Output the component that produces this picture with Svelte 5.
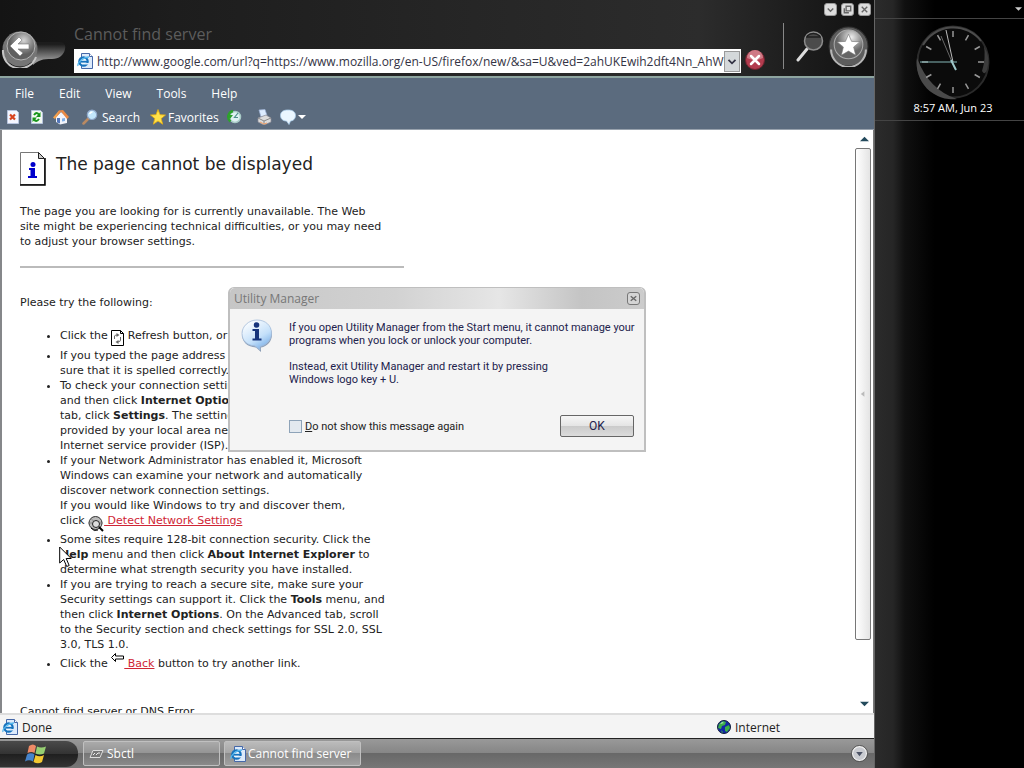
<script lang="ts">
    const menus = ["File", "Edit", "View", "Tools", "Help"];
    const ticks = [0, 30, 60, 90, 120, 150, 180, 210, 240, 270, 300, 330];

    let address = $state(
        "http://www.google.com/url?q=https://www.mozilla.org/en-US/firefox/new/&sa=U&ved=2ahUKEwih2dft4Nn_AhWuMV",
    );
    let hideMessage = $state(false);
    let dialogOpen = $state(true);
</script>

{#snippet ieIcon()}
    <svg class="ie" viewBox="0 0 16 16" aria-hidden="true">
        <path d="M4.500 .5h8l3 3v12h-11z" fill="#dceafa" stroke="#4668a8" />
        <path d="M12.500 .5v3h3" fill="#fff" stroke="#4668a8" />
        <circle cx="6.500" cy="8.500" r="4.200" fill="#eef8ff" stroke="#1672bd" stroke-width="2.200" />
        <path d="M3 8.700h8" stroke="#1672bd" stroke-width="1.800" />
        <path d="M8 10h4v1.500h-4z" fill="#dceafa" />
        <path d="M1 13C0 10 6 4 12 4" fill="none" stroke="#55b8ee" stroke-width="1.300" />
    </svg>
{/snippet}

<div class="screen">
    <div class="workspace">
        <div class="browser">
            <header>
                <div class="caption">
                    <button aria-label="Minimize">
                        <svg viewBox="0 0 12 12"><path d="M3 5l3 3 3-3" /></svg>
                    </button>
                    <button aria-label="Restore">
                        <svg viewBox="0 0 12 12"><path d="M4.500 2.500h5v5h-5zM2.500 4.500v5h5" /></svg>
                    </button>
                    <button aria-label="Close">
                        <svg viewBox="0 0 12 12"><path d="M3 3l6 6M9 3l-6 6" /></svg>
                    </button>
                </div>
                <div class="navigation">
                    <button class="back" aria-label="Back">
                        <svg viewBox="0 0 66 38">
                            <defs>
                                <linearGradient id="tail" x1="0" y1="0" x2="0" y2="1">
                                    <stop offset="0.100" stop-color="#1d1d1d" />
                                    <stop offset="0.800" stop-color="#979797" />
                                </linearGradient>
                                <radialGradient id="orb" cx="0.600" cy="0.300">
                                    <stop offset="0" stop-color="#d5d5d5" />
                                    <stop offset="0.600" stop-color="#8b8b8b" />
                                    <stop offset="1" stop-color="#606060" />
                                </radialGradient>
                            </defs>
                            <path d="M28 12h31c5 0 7 3 6 7-1 6-6 10-13 10-10 0-13 1-19 6z" fill="url(#tail)" />
                            <circle cx="20" cy="19" r="17.500" fill="#757575" />
                            <path d="M3 20a17 17 0 0 0 33 7" fill="none" stroke="#c4c4c4" stroke-width="2" />
                            <circle cx="21" cy="16" r="14" fill="url(#orb)" stroke="#b4b4b4" />
                            <path d="M10 16l9-9 3 3-4 4h11v5H18l5 4-3 3z" fill="#fff" stroke="#777" stroke-width=".6" />
                        </svg>
                    </button>
                    <div class="location">
                        <h1>Cannot find server</h1>
                        <div class="address">
                            {@render ieIcon()}
                            <input type="text" aria-label="Address" bind:value={address} />
                            <button aria-label="Show addresses">
                                <svg viewBox="0 0 16 20"><path d="M4 9l4 4 4-4" /></svg>
                            </button>
                        </div>
                    </div>
                    <button class="stop" aria-label="Stop">
                        <svg viewBox="0 0 20 20">
                            <circle cx="10" cy="10" r="9.500" fill="#b23c4e" stroke="#6e2430" />
                            <path d="M2 8a8 8 0 0 1 16 0q-8 4-16 0z" fill="#cf7a86" />
                            <path d="M6 6l8 8M14 6l-8 8" stroke="#fff" stroke-width="2.500" stroke-linecap="round" />
                        </svg>
                    </button>
                    <div class="tools">
                        <button class="find" aria-label="Search">
                            <svg viewBox="0 0 28 32">
                                <path d="M11 19L2 30" stroke="#ddd" stroke-width="3" stroke-linecap="round" />
                                <circle cx="17.500" cy="11" r="9" fill="#4b4b4b" stroke="#8c8c8c" stroke-width="1.500" />
                                <path d="M10 7h15M11 6q6-5 13 0" fill="none" stroke="#1f1f1f" stroke-width="1.500" />
                            </svg>
                        </button>
                        <button class="star" aria-label="Favorites">
                            <svg viewBox="0 0 40 40">
                                <defs>
                                    <radialGradient id="shine" cx="0.600" cy="0.250">
                                        <stop offset="0" stop-color="#eee" />
                                        <stop offset="0.500" stop-color="#aaa" />
                                        <stop offset="1" stop-color="#666" />
                                    </radialGradient>
                                </defs>
                                <circle cx="20" cy="20" r="19" fill="#5d5d5d" stroke="#303030" />
                                <path d="M3 23a17 17 0 0 0 34 0" fill="none" stroke="#b6b6b6" stroke-width="2" />
                                <circle cx="20" cy="18" r="14" fill="url(#shine)" stroke="#aaa" />
                                <path d="M20 8l3 7 8 .5-6 5 2 8-7-4-7 4 2-8-6-5 8-.5z" fill="#fff" stroke="#777" stroke-width=".6" />
                            </svg>
                        </button>
                    </div>
                </div>
            </header>

            <div class="bars">
                <nav>
                    {#each menus as menu}
                        <button>{menu}</button>
                    {/each}
                </nav>
                <div class="toolbar">
                    <button aria-label="Stop loading">
                        <svg viewBox="0 0 16 16">
                            <path d="M2.500 1.500h9l2 2v11h-11z" fill="#f4f6ff" stroke="#b7c4de" />
                            <path d="M5 5.500l5 5M10 5.500l-5 5" stroke="#d8431f" stroke-width="2.200" />
                        </svg>
                    </button>
                    <button aria-label="Refresh">
                        <svg viewBox="0 0 16 16">
                            <path d="M2.500 1.500h9l2 2v11h-11z" fill="#f2faf2" stroke="#b7c4de" />
                            <path d="M5 6q3-4 5 0M10 10q-3 4-5 0" fill="none" stroke="#18951c" stroke-width="2" />
                            <path d="M11.500 3v5H7zM3.500 13V8.500H8z" fill="#18951c" />
                        </svg>
                    </button>
                    <button aria-label="Home">
                        <svg viewBox="0 0 16 16">
                            <path d="M3 8l5-5 6 5v6l-7 1.500L3 13z" fill="#f3f5fb" />
                            <path d="M0 8.500L6 1.500l2 1L2 10z" fill="#f4a14d" />
                            <path d="M6 1.500L10 1l6 7-2 2-6-7.500L4 7z" fill="#e98a45" />
                            <path d="M4 9h3v5.500l-3-1z" fill="#5376b9" />
                            <path d="M9 9.500l3-.5v3l-3 .5z" fill="#7fb0e8" />
                        </svg>
                    </button>
                    <button class="search">
                        <svg viewBox="0 0 16 16">
                            <path d="M7 9L1.500 14.500" stroke="#b98a63" stroke-width="2.500" stroke-linecap="round" />
                            <circle cx="10" cy="5.800" r="4.700" fill="#c2e6fb" stroke="#91a9cb" stroke-width="1.200" />
                            <path d="M7.500 5q1-2 3-2" fill="none" stroke="#fff" stroke-width="1.500" />
                        </svg>
                        Search
                    </button>
                    <button class="favorites">
                        <svg viewBox="0 0 16 16">
                            <path d="M8 .5l2 5.200 5.500.3-4.300 3.600 1.500 5.600L8 12l-4.700 3.200 1.500-5.600L.5 6 6 5.700z" fill="#ffe24a" stroke="#e6ad10" stroke-width=".8" />
                        </svg>
                        Favorites
                    </button>
                    <button aria-label="History">
                        <svg viewBox="0 0 16 16">
                            <circle cx="8" cy="8" r="5.500" fill="#dff0f2" stroke="#a8cbc7" stroke-width="1.500" />
                            <path d="M11 4L7.500 8.500H11" fill="none" stroke="#4f8f8a" stroke-width="1.200" />
                            <path d="M3.500 12.500A6 6 0 0 1 6 2" fill="none" stroke="#2da22c" stroke-width="2.500" />
                            <path d="M0 6h6L3 10z" fill="#2da22c" />
                        </svg>
                    </button>
                    <button class="print" aria-label="Print">
                        <svg viewBox="0 0 16 16">
                            <path d="M3 1l6-.5 2 6-6 1.500z" fill="#dcecff" stroke="#9db2d6" stroke-width=".7" />
                            <path d="M2 9l8-3 5 3v4l-7 3-6-3z" fill="#dcdcdc" stroke="#8b8b95" stroke-width=".7" />
                            <path d="M2 9l6 3 7-3M8 12v4" fill="none" stroke="#888" />
                            <path d="M4 13l4 2 3-1" stroke="#f2a26a" fill="none" />
                        </svg>
                    </button>
                    <button aria-label="Discuss">
                        <svg class="bubble" viewBox="0 0 26 16">
                            <path d="M8 1c5 0 7.500 2 7.500 5.500S13 12 10.500 12L9 15.500 6.500 12C3 12 .5 10 .5 6.500S3 1 8 1z" fill="#eaf6ff" stroke="#a9cbe8" stroke-width=".8" />
                            <path d="M18 6h8l-4 4z" fill="#fff" />
                        </svg>
                    </button>
                </div>
            </div>

            <div class="view">
                <main>
                    <div class="heading">
                        <svg viewBox="0 0 26 34" aria-hidden="true">
                            <path d="M.5 .5h18l6 6v26H.5z" fill="#fff" stroke="#777" />
                            <path d="M25 6v27H0" fill="none" stroke="#000" stroke-width="1.500" />
                            <path d="M18.500 .5v6h6z" fill="#ccc" stroke="#222" />
                            <circle cx="13" cy="12.500" r="2.500" fill="#00c" />
                            <path d="M9 16h6v8h2v2H8v-2h2.500v-6H9z" fill="#00c" />
                        </svg>
                        <h2>The page cannot be displayed</h2>
                    </div>
                    <p>
                        The page you are looking for is currently unavailable. The Web<br />
                        site might be experiencing technical difficulties, or you may need<br />
                        to adjust your browser settings.
                    </p>
                    <hr />
                    <p>Please try the following:</p>
                    <ul>
                        <li>
                            Click the
                            <svg class="low" viewBox="0 0 13 16" aria-hidden="true">
                                <path d="M.5 .5h9l3 3v12H.5z" fill="#fff" stroke="#000" />
                                <path d="M9.500 .5v3h3" fill="none" stroke="#000" />
                                <path d="M3.500 9V6q0-1 3-1M9.500 7v3q0 2-3 2" fill="none" stroke="#666" />
                                <path d="M5.500 3l3 2-3 2zM7.500 10l-3 2 3 2z" fill="#666" />
                            </svg>
                            Refresh button, or try again later.
                        </li>
                        <li>
                            If you typed the page address in the Address bar, make<br />
                            sure that it is spelled correctly.
                        </li>
                        <li>
                            To check your connection settings, click the <b>Tools</b> menu,<br />
                            and then click <b>Internet Options</b>. On the <b>Connections</b><br />
                            tab, click <b>Settings</b>. The settings should match those<br />
                            provided by your local area network (LAN) administrator or<br />
                            Internet service provider (ISP).
                        </li>
                        <li>
                            If your Network Administrator has enabled it, Microsoft<br />
                            Windows can examine your network and automatically<br />
                            discover network connection settings.<br />
                            If you would like Windows to try and discover them,<br />
                            click
                            <a href="#detect"><svg class="detect" viewBox="0 0 16 16" aria-hidden="true">
                                <circle cx="7.500" cy="7" r="6.500" fill="#bbb" stroke="#333" />
                                <path d="M0 7h15M3 2.500l9 9" stroke="#777" stroke-width=".7" />
                                <circle cx="8" cy="8" r="3.500" fill="#ddd" stroke="#222" />
                                <path d="M11 11l4 4" stroke="#000" stroke-width="2" />
                                <path d="M3 12q3 4 7 2" fill="none" stroke="#000" />
                            </svg> Detect Network Settings</a>
                        </li>
                        <li>
                            Some sites require 128-bit connection security. Click the<br />
                            <b>Help</b> menu and then click <b>About Internet Explorer</b> to<br />
                            determine what strength security you have installed.
                        </li>
                        <li>
                            If you are trying to reach a secure site, make sure your<br />
                            Security settings can support it. Click the <b>Tools</b> menu, and<br />
                            then click <b>Internet Options</b>. On the Advanced tab, scroll<br />
                            to the Security section and check settings for SSL 2.0, SSL<br />
                            3.0, TLS 1.0.
                        </li>
                        <li>
                            Click the
                            <a href="#back"><svg class="high" viewBox="0 0 13 16" aria-hidden="true">
                                <path d="M.5 5.500l4-4v2.500h8v3h-8v2.500z" fill="#fff" stroke="#000" />
                            </svg> Back</a>
                            button to try another link.
                        </li>
                    </ul>
                    <p>Cannot find server or DNS Error</p>
                </main>
                <div class="scrollbar">
                    <button aria-label="Scroll up">
                        <svg viewBox="0 0 10 6"><path d="M0 5.500L5 .5l5 5z" /></svg>
                    </button>
                    <div class="track">
                        <div class="thumb">
                            <svg viewBox="0 0 10 6"><path d="M6 0v6L2 3z" /></svg>
                        </div>
                    </div>
                    <button aria-label="Scroll down">
                        <svg viewBox="0 0 10 6"><path d="M0 .5h10l-5 5z" /></svg>
                    </button>
                </div>
            </div>

            <footer>
                {@render ieIcon()}
                <span>Done</span>
                <svg class="globe" viewBox="0 0 14 14" aria-hidden="true">
                    <circle cx="7" cy="7" r="6.500" fill="#1227a5" stroke="#101c38" />
                    <path d="M2 4l4-3 3 1-1 3-3 1-1 3-3-1zM8 7l4-2 1 3-3 4-2-1zM4 10l2 2-1 1z" fill="#3cae48" />
                    <path d="M3 4l2-2 2 1z" fill="#b4e8c0" />
                </svg>
                <span>Internet</span>
            </footer>
        </div>

        <div class="taskbar">
            <button class="start" aria-label="Start">
                <svg viewBox="0 0 22 22">
                    <path d="M4 3q4-3 7 0L9.500 10q-3-2-7 0z" fill="#ee8a66" />
                    <path d="M12 3.500q4 2 9 0L19 10.500q-4 2-8.500 0z" fill="#96cf72" />
                    <path d="M2 11.500q4-2.500 7.500 0L8 18.500q-4-2.500-8 0z" fill="#4684cb" />
                    <path d="M10.500 12q4 2.500 8.500 0l-2 7q-4 2.500-8.500 0z" fill="#f3c832" />
                </svg>
            </button>
            <button class="task">
                <svg viewBox="0 0 16 16">
                    <path d="M4 4.500h10l-3 7H1z" fill="#777" stroke="#ddd" />
                    <path d="M4 9l2-2M7 9l2-2h2" stroke="#eee" fill="none" />
                </svg>
                Sbctl
            </button>
            <button class="task active">
                {@render ieIcon()}
                Cannot find server
            </button>
            <button class="tray" aria-label="Show hidden icons">
                <svg viewBox="0 0 18 18">
                    <circle cx="9" cy="9" r="7.500" fill="#c9cbd0" stroke="#f0f0f0" stroke-width="1.500" />
                    <circle cx="9" cy="9" r="8.500" fill="none" stroke="#444" stroke-width=".8" />
                    <path d="M5.500 7.500h7L9 12z" fill="#4c5366" />
                </svg>
            </button>
        </div>

        {#if dialogOpen}
            <div class="overlay">
                <div class="dialog" role="dialog" aria-labelledby="dialog-title">
                    <div class="titlebar">
                        <span id="dialog-title">Utility Manager</span>
                        <button aria-label="Close" onclick={() => (dialogOpen = false)}>
                            <svg viewBox="0 0 12 12"><path d="M3 3.500l6 5M9 3.500l-6 5" /></svg>
                        </button>
                    </div>
                    <div class="message">
                        <svg viewBox="0 0 32 34" aria-hidden="true">
                            <defs>
                                <linearGradient id="balloon" x1="0.200" y1="0" x2="0.800" y2="1">
                                    <stop offset="0" stop-color="#fff" />
                                    <stop offset="0.600" stop-color="#c4e0fa" />
                                    <stop offset="1" stop-color="#6ea7e4" />
                                </linearGradient>
                            </defs>
                            <path d="M16 2c9 0 15 6 15 13.500 0 7-5 12-11 13L20 33l-5-4.500C6.500 28 1 23 1 15.500S7 2 16 2z" fill="#8b9db5" />
                            <path d="M16 1c8.500 0 14.500 5.500 14.500 13S25 26.500 19 27.500V31l-5-4C6 26.500 1 21.500 1 14.500S7.500 1 16 1z" fill="url(#balloon)" stroke="#a4bdda" stroke-width=".8" />
                            <circle cx="15.500" cy="6" r="2.800" fill="#16347c" />
                            <path d="M11.500 10h6.500v9.500h2.500v2h-9v-2h2.500V12h-2.500z" fill="#16347c" />
                        </svg>
                        <div class="words">
                            <p>
                                If you open Utility Manager from the Start menu, it cannot manage your<br />
                                programs when you lock or unlock your computer.
                            </p>
                            <p>
                                Instead, exit Utility Manager and restart it by pressing<br />
                                Windows logo key + U.
                            </p>
                        </div>
                    </div>
                    <div class="actions">
                        <label>
                            <input type="checkbox" bind:checked={hideMessage} />
                            <span><u>D</u>o not show this message again</span>
                        </label>
                        <button onclick={() => (dialogOpen = false)}>OK</button>
                    </div>
                </div>
            </div>
        {/if}
    </div>

    <aside>
        <div class="sidebar-top">
            <svg viewBox="0 0 8 4"><path d="M0 0h8L4 4z" fill="#ccc" /></svg>
        </div>
        <div class="clock">
            <svg viewBox="0 0 76 76" role="img" aria-label="Clock">
                <circle cx="38" cy="38" r="35.500" fill="#0b0b0b" stroke="#2a2a2a" stroke-width="2" />
                <path d="M2 34A36 36 0 0 0 42 75Q14 66 2 34z" fill="#4a4a4a" />
                <path d="M8 21A35 35 0 0 1 66 17" fill="none" stroke="#4c4c4c" stroke-width="2" />
                <path d="M69 22q7 12 3 24-2 6-5 1 4-12 2-25z" fill="#3c3c3c" />
                {#each ticks as angle}
                    <path d="M38 7v6" stroke="#999" stroke-width="1.500" transform="rotate({angle} 38 38)" />
                {/each}
                <path d="M42 38H5" stroke="#86b7b7" stroke-width="1.200" />
                <path d="M40 45L26 12" stroke="#666" />
                <path d="M38 38L31 6" stroke="#bbb" />
                <path d="M36 36l5 10" stroke="#9dc7c9" stroke-width="2" />
            </svg>
            <span>8:57 AM, Jun 23</span>
        </div>
    </aside>

    <svg class="pointer" viewBox="0 0 14 22" aria-hidden="true">
        <path d="M.7 1v16l4-3.500 3 7 2.500-1-3-7h5z" fill="#fff" stroke="#000" />
    </svg>
</div>

<style>
    :global(body) {
        background: #000;
    }

    .screen {
        position: relative;
        display: grid;
        grid-template-columns: 1fr 150px;
        height: 100vh;
        overflow: hidden;
        font-family: "Open Sans", "Noto Sans", sans-serif;
        font-size: 12px;
    }

    button {
        padding: 0;
        border: 0;
        background: none;
        color: inherit;
        font: inherit;
    }

    svg {
        display: block;
        flex: none;
    }

    h1,
    h2,
    p {
        margin: 0;
        font-weight: normal;
    }

    .workspace {
        position: relative;
        display: flex;
        flex-direction: column;
        min-width: 0;
        min-height: 0;
    }

    .browser {
        flex: 1;
        display: flex;
        flex-direction: column;
        min-height: 0;
    }

    .ie {
        width: 16px;
        height: 16px;
    }

    header {
        background: linear-gradient(90deg, #141414, #1d1d1d 20%, #252525 50%, #2c2c2c 80%, #111);
        border-bottom: 2px solid #8ea5a0;
        box-sizing: border-box;
        height: 78px;
    }

    .caption {
        display: flex;
        justify-content: flex-end;
        gap: 4px;
        height: 20px;
        padding: 3px 3px 0 0;
        box-sizing: border-box;
    }

    .caption button,
    .titlebar button {
        width: 13px;
        height: 13px;
        box-sizing: border-box;
        border: 1px solid #999;
        border-radius: 3px;
        background: #ddd;
    }

    .caption path,
    .titlebar path {
        fill: none;
        stroke: #666;
        stroke-width: 1.5;
    }

    .titlebar button {
        border-color: #777;
        background: #d4d4d4;
    }

    .navigation {
        display: flex;
        align-items: flex-end;
        height: 53px;
    }

    .back {
        width: 74px;
        height: 48px;
    }

    .back svg {
        width: 66px;
        height: 38px;
    }

    .location {
        flex: 1;
        min-width: 0;
    }

    h1 {
        font-size: 16px;
        line-height: 26px;
        padding-bottom: 2px;
        color: #5c5c5c;
    }

    .address {
        display: flex;
        align-items: center;
        height: 24px;
        padding-left: 3px;
        background: #fff;
    }

    .address input {
        flex: 1;
        min-width: 0;
        margin-left: 4px;
        padding: 0;
        border: 0;
        outline: none;
        background: none;
        color: #334;
        font: inherit;
    }

    .address button {
        width: 16px;
        height: 21px;
        margin-right: 1px;
        box-sizing: border-box;
        border: 1px solid #999;
        background: #d4d8da;
    }

    .address button path {
        fill: none;
        stroke: #334;
        stroke-width: 2;
    }

    .stop {
        margin: 0 18px 3px 4px;
    }

    .stop svg {
        width: 20px;
        height: 20px;
    }

    .tools {
        display: flex;
        align-items: center;
        height: 46px;
        margin: 0 5px 4px 0;
        padding-left: 12px;
        border-left: 1px solid #888;
    }

    .find svg {
        width: 28px;
        height: 32px;
    }

    .star {
        margin-left: 4px;
    }

    .star svg {
        width: 41px;
        height: 41px;
    }

    .bars {
        height: 52px;
        box-sizing: border-box;
        border-bottom: 1px solid #98a2ad;
        background: #5b6b7e;
        color: #fff;
    }

    nav {
        display: flex;
        gap: 25px;
        padding-left: 15px;
        height: 30px;
    }

    .toolbar {
        display: flex;
        align-items: center;
        gap: 8px;
        padding-left: 5px;
        height: 18px;
    }

    .toolbar button {
        display: flex;
        align-items: center;
        gap: 4px;
    }

    .toolbar svg {
        width: 16px;
        height: 16px;
    }

    .toolbar .search,
    .toolbar .print {
        margin-left: 5px;
    }

    .toolbar .favorites {
        gap: 2px;
        margin-left: 2px;
    }

    .toolbar .bubble {
        width: 26px;
    }

    .view {
        flex: 1;
        display: flex;
        min-height: 0;
        border-left: 2px solid #85878a;
        border-right: 1px solid #777;
        background: #fff;
    }

    main {
        flex: 1;
        min-width: 0;
        overflow: hidden;
        padding: 22px 18px 0;
        color: #222;
        font: 11px/15px "DejaVu Sans", sans-serif;
    }

    .heading {
        display: flex;
        gap: 10px;
        margin-bottom: 18px;
    }

    .heading svg {
        width: 26px;
        height: 34px;
    }

    h2 {
        font-size: 17px;
        line-height: 24px;
    }

    main > p,
    hr,
    ul {
        max-width: 384px;
    }

    hr {
        height: 2px;
        margin: 17px 0 27px;
        border: 0;
        background: #bbb;
    }

    ul {
        box-sizing: border-box;
        margin: 18px 0 33px;
        padding-left: 40px;
    }

    li svg {
        display: inline;
        width: 13px;
        height: 16px;
    }

    .low {
        margin-bottom: 2px;
        vertical-align: -9px;
    }

    li .detect {
        width: 16px;
        vertical-align: -8px;
    }

    .high {
        vertical-align: -1px;
    }

    a {
        color: #d02535;
    }

    .scrollbar {
        display: flex;
        flex-direction: column;
        width: 18px;
    }

    .scrollbar button {
        display: flex;
        align-items: center;
        justify-content: center;
        height: 18px;
    }

    .scrollbar svg {
        width: 9px;
        height: 6px;
        fill: #234a5c;
    }

    .track {
        flex: 1;
        min-height: 0;
    }

    .thumb {
        display: grid;
        place-items: center;
        width: 16px;
        height: 90%;
        box-sizing: border-box;
        border: 1px solid #777;
        border-radius: 2px;
        background: linear-gradient(90deg, #fff, #e4e4e4);
    }

    .thumb svg {
        fill: #bbb;
    }

    footer {
        display: grid;
        grid-template-columns: 16px 1fr 14px 139px;
        align-items: center;
        gap: 4px;
        height: 26px;
        box-sizing: border-box;
        padding: 1px 0 0 2px;
        border-top: 2px solid #ddd;
        border-bottom: 1px solid #222;
        background: #f4f4f4;
        color: #222;
    }

    .globe {
        width: 14px;
        height: 14px;
    }

    .taskbar {
        display: flex;
        align-items: center;
        gap: 4px;
        height: 29px;
        background: linear-gradient(#999, #858585 50%, #686868 50%, #777);
        color: #fff;
    }

    .start {
        display: grid;
        place-items: center;
        width: 78px;
        height: 26px;
        margin-right: 1px;
        padding-right: 6px;
        border-radius: 0 12px 12px 0;
        background: linear-gradient(#4a4a4a, #333 50%, #1f1f1f 50%, #333);
    }

    .start svg {
        width: 22px;
        height: 22px;
    }

    .task {
        display: flex;
        align-items: center;
        gap: 2px;
        width: 137px;
        height: 25px;
        padding-left: 5px;
        border: 1px solid #c0c0c0;
        border-radius: 2px;
        background: linear-gradient(#aaa, #939393 50%, #767676 50%, #8a8a8a);
    }

    .active {
        background: linear-gradient(#bbb, #a5a5a5 50%, #8b8b8b 50%, #a0a0a0);
    }

    .task svg {
        width: 16px;
        height: 16px;
    }

    .tray {
        margin: 0 6px 0 auto;
    }

    .tray svg {
        width: 17px;
        height: 17px;
    }

    .overlay {
        position: absolute;
        inset: 0 0 29px;
        display: grid;
        place-items: center;
        pointer-events: none;
    }

    .dialog {
        width: 418px;
        box-sizing: border-box;
        border: 2px solid #bfbfbf;
        border-top-width: 1px;
        border-radius: 6px 6px 0 0;
        background: #f4f4f4;
        pointer-events: auto;
    }

    .titlebar {
        display: flex;
        align-items: center;
        justify-content: space-between;
        height: 21px;
        padding: 0 4px;
        border-radius: 5px 5px 0 0;
        background: linear-gradient(90deg, #c6c6c6, #d2d2d2 40%, #e6e6e6 65%, #c4c4c4 85%, #ccc);
        color: #777;
    }

    .message {
        display: flex;
        gap: 16px;
        padding: 10px 11px 0;
        color: #22224c;
    }

    .message svg {
        width: 32px;
        height: 34px;
    }

    .words {
        display: flex;
        flex-direction: column;
        gap: 13px;
        padding-top: 2px;
        font: 11px/13px Roboto, "Liberation Sans", sans-serif;
        white-space: nowrap;
    }

    .actions {
        display: flex;
        align-items: center;
        justify-content: space-between;
        padding: 29px 10px 13px 59px;
        color: #222;
        font: 11px/13px Roboto, "Liberation Sans", sans-serif;
    }

    .actions label {
        display: flex;
        align-items: center;
        gap: 3px;
    }

    .actions input {
        appearance: none;
        box-sizing: border-box;
        width: 13px;
        height: 13px;
        margin: 0;
        border: 1px solid #8ea3b8;
        background: #e3e9ef;
    }

    .actions input:checked {
        background: #456;
    }

    .actions button {
        width: 74px;
        height: 22px;
        border: 1px solid #666;
        border-radius: 2px;
        background: linear-gradient(#f6f6f6, #e4e4e4 50%, #cacaca 50%, #dcdcdc);
        color: #22224c;
        font-size: 12px;
    }

    aside {
        border-left: 1px solid #666;
        background: linear-gradient(90deg, #2b2b2b, #262626 12%, #101010 20%, #000 40%);
        color: #fff;
    }

    .sidebar-top {
        display: flex;
        align-items: center;
        justify-content: flex-end;
        height: 18px;
        padding-right: 2px;
        border-bottom: 1px solid #444;
    }

    .sidebar-top svg {
        width: 7px;
        height: 4px;
    }

    .clock {
        display: flex;
        flex-direction: column;
        align-items: center;
        height: 102px;
        padding: 5px 0 0 7px;
        box-sizing: border-box;
        border-bottom: 1px solid #444;
        font-size: 11px;
    }

    .clock svg {
        width: 76px;
        height: 76px;
    }

    .pointer {
        position: absolute;
        left: 59px;
        top: 546px;
        width: 14px;
        height: 22px;
    }
</style>
